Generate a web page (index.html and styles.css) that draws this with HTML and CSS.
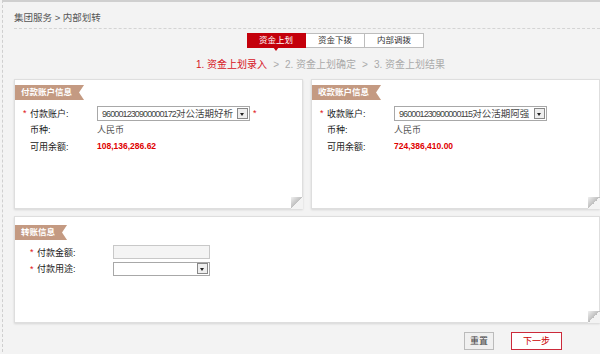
FILE: index.html
```html
<!doctype html>
<html>
  <head>
    <meta charset="utf-8">
    <title>内部划转</title>
    <link rel="stylesheet" href="styles.css">
  </head>
  <body>
    <div class="page">
      <div class="crumb">集团服务 &gt; 内部划转</div>

      <div class="tabs">
        <span class="tab active">资金上划</span>
        <span class="tab">资金下拨</span>
        <span class="tab">内部调拨</span>
      </div>

      <div class="steps">
        <span class="on">1. 资金上划录入</span>
        <span class="sep">&gt;</span>
        <span>2. 资金上划确定</span>
        <span class="sep">&gt;</span>
        <span>3. 资金上划结果</span>
      </div>

      <div class="panels">
        <div class="panel">
          <div class="ribbon">付款账户信息</div>
          <div class="rows">
            <div class="row">
              <span class="star">*</span>
              <span class="label">付款账户:</span>
              <div class="select wide">
                <span class="text"><span class="num">960001230900000172</span>对公活期好析</span>
                <span class="arrow"></span>
              </div>
              <span class="star after">*</span>
            </div>
            <div class="row">
              <span class="star"></span>
              <span class="label">币种:</span>
              <span class="value">人民币</span>
            </div>
            <div class="row">
              <span class="star"></span>
              <span class="label">可用余额:</span>
              <span class="money">108,136,286.62</span>
            </div>
          </div>
        </div>

        <div class="panel">
          <div class="ribbon">收款账户信息</div>
          <div class="rows">
            <div class="row">
              <span class="star">*</span>
              <span class="label">收款账户:</span>
              <div class="select wide">
                <span class="text"><span class="num">960001230900000115</span>对公活期阿强</span>
                <span class="arrow"></span>
              </div>
            </div>
            <div class="row">
              <span class="star"></span>
              <span class="label">币种:</span>
              <span class="value">人民币</span>
            </div>
            <div class="row">
              <span class="star"></span>
              <span class="label">可用余额:</span>
              <span class="money">724,386,410.00</span>
            </div>
          </div>
        </div>
      </div>

      <div class="panel transfer">
        <div class="ribbon">转账信息</div>
        <div class="rows">
          <div class="row">
            <span class="star">*</span>
            <span class="label">付款金额:</span>
            <span class="input"></span>
          </div>
          <div class="row">
            <span class="star">*</span>
            <span class="label">付款用途:</span>
            <div class="select short">
              <span class="text"></span>
              <span class="arrow"></span>
            </div>
          </div>
        </div>
      </div>

      <div class="actions">
        <button class="btn">重置</button>
        <button class="btn next">下一步</button>
      </div>
    </div>
  </body>
</html>
```

FILE: styles.css
```css
html, body {
  margin: 0;
  height: 100%;
}

body {
  background: #f3f3f3;
  color: #333;
  font-family: "Liberation Sans", "Noto Sans CJK SC", sans-serif;
  font-size: 9px;
  overflow: hidden;
}

.page {
  border-top: 2px solid #cfcfcf;
  border-left: 1px dashed #cfcfcf;
  margin-left: 2px;
  height: 352px;
  box-sizing: border-box;
}

.crumb {
  color: #555;
  font-size: 9.5px;
  line-height: 16px;
  margin-left: 11px;
  padding-top: 8px;
  padding-bottom: 2px;
  border-bottom: 1px dashed #d4d4d4;
}

.tabs {
  display: flex;
  margin: 4px 0 0 244px;
}

.tab {
  position: relative;
  width: 58px;
  height: 13px;
  line-height: 13px;
  border: 1px solid #bdbdbd;
  border-left: none;
  background: #fff;
  color: #333;
  font-size: 8.5px;
  text-align: center;
}

.tab.active {
  background: #c4000b;
  border-color: #c4000b;
  color: #fff;
}

.tab.active:after {
  content: "";
  position: absolute;
  left: 50%;
  bottom: -4px;
  margin-left: -3px;
  border-left: 3px solid transparent;
  border-right: 3px solid transparent;
  border-top: 4px solid #c4000b;
}

.steps {
  display: flex;
  gap: 6px;
  margin: 9px 0 0 193px;
  color: #aaa;
  font-size: 10px;
  line-height: 16px;
}

.steps .on {
  color: #d7141e;
}

.panels {
  display: flex;
  gap: 8px;
  margin: 6px 0 0 11px;
}

.panel {
  position: relative;
  background: #fff;
  border: 1px solid #dedede;
  box-shadow: 0 1px 2px rgba(0, 0, 0, 0.12);
  width: 287px;
  height: 123px;
  padding-top: 5px;
}

.panel:after {
  content: "";
  position: absolute;
  right: -1px;
  bottom: -1px;
  width: 12px;
  height: 12px;
  background: linear-gradient(to top left, #f3f3f3 50%, #bdbdbd 50%, #f0f0f0 100%);
}

.ribbon {
  display: inline-block;
  background: #c49a82;
  color: #fff;
  font-weight: bold;
  font-size: 8.5px;
  line-height: 15px;
  height: 15px;
  padding: 0 12px 0 6px;
  clip-path: polygon(0 0, 100% 0, calc(100% - 5px) 50%, 100% 100%, 0 100%);
}

.rows {
  padding: 5px 0 0 8px;
}

.row {
  display: flex;
  align-items: center;
  height: 16.5px;
}

.star {
  width: 7px;
  color: #e01010;
  font-size: 9px;
}

.star.after {
  width: auto;
  margin-left: 3px;
}

.label {
  width: 67px;
  color: #222;
}

.value {
  color: #555;
}

.money {
  color: #e00000;
  font-weight: bold;
  font-size: 8.5px;
}

.select {
  display: flex;
  align-items: center;
  height: 15px;
  border: 1px solid #a8a8a8;
  background: #fff;
  box-sizing: border-box;
  padding-right: 1px;
}

.select.wide {
  width: 153px;
}

.select.short {
  width: 97px;
  height: 14px;
}

.select .text {
  flex: 1;
  overflow: hidden;
  white-space: nowrap;
  color: #444;
  padding-left: 4px;
  font-size: 9.5px;
}

.select .num {
  font-size: 9px;
  letter-spacing: -0.9px;
}

.arrow {
  position: relative;
  flex: none;
  width: 11px;
  height: 11px;
  border: 1px solid #888;
  background: #eee;
  box-sizing: border-box;
}

.arrow:after {
  content: "";
  position: absolute;
  left: 2px;
  top: 4px;
  border-left: 2.5px solid transparent;
  border-right: 2.5px solid transparent;
  border-top: 3px solid #222;
}

.transfer {
  width: 584px;
  height: 97px;
  padding-top: 8px;
  margin: 7px 0 0 11px;
}

.transfer .rows {
  padding: 4px 0 0 15px;
}

.transfer .label {
  width: 76px;
}

.input {
  width: 97px;
  height: 14px;
  border: 1px solid #c8c8c8;
  background: #f4f4f4;
  box-sizing: border-box;
}

.actions {
  display: flex;
  justify-content: flex-end;
  gap: 17px;
  margin: 9px 38px 0 0;
}

.btn {
  height: 18px;
  padding: 0 5px;
  border: 1px solid #bbb;
  background: #f0f0f0;
  color: #444;
  font-family: inherit;
  font-size: 9px;
  line-height: 16px;
  cursor: pointer;
}

.btn.next {
  width: 51px;
  border-color: #cc2a3a;
  background: #fff;
  color: #cc0000;
}
```
